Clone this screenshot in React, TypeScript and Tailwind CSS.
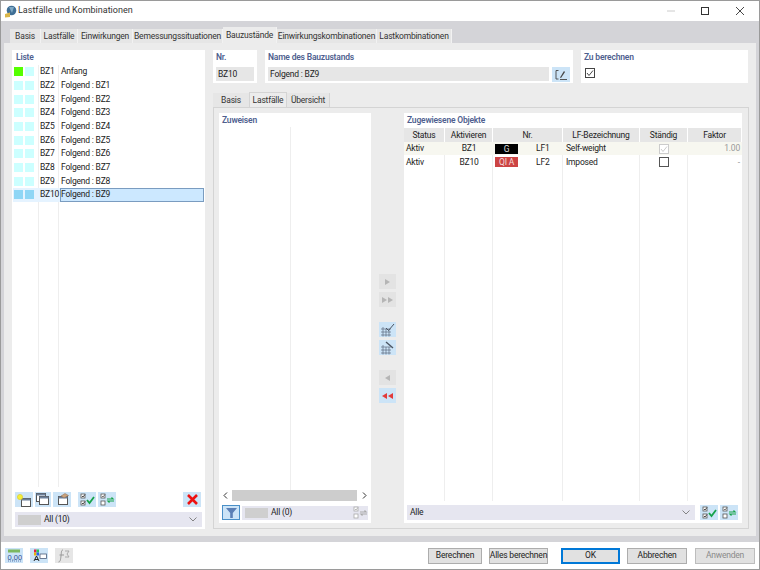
import type { ReactNode } from 'react'

const mainTabs = ['Basis', 'Lastfälle', 'Einwirkungen', 'Bemessungssituationen', 'Bauzustände', 'Einwirkungskombinationen', 'Lastkombinationen']
const mainTabWidths = [31, 37, 55, 90, 54, 100, 75]

const listRows = [
  ['BZ1', 'Anfang'],
  ['BZ2', 'Folgend : BZ1'],
  ['BZ3', 'Folgend : BZ2'],
  ['BZ4', 'Folgend : BZ3'],
  ['BZ5', 'Folgend : BZ4'],
  ['BZ6', 'Folgend : BZ5'],
  ['BZ7', 'Folgend : BZ6'],
  ['BZ8', 'Folgend : BZ7'],
  ['BZ9', 'Folgend : BZ8'],
  ['BZ10', 'Folgend : BZ9'],
]

function IconBtn({ children, className = 'bg-[#cce4f7]', w = 'w-[18px]' }: { children?: ReactNode; className?: string; w?: string }) {
  return <div className={`${w} h-[15px] flex items-center justify-center shrink-0 ${className}`}>{children}</div>
}

function Heading({ children }: { children: ReactNode }) {
  return <div className="text-[8.5px] tracking-[-0.2px] leading-[12px] font-semibold text-[#4f5f8f] whitespace-nowrap">{children}</div>
}

function Chevron() {
  return (
    <svg width="8" height="5" viewBox="0 0 8 5" className="shrink-0">
      <path d="M0.5 0.5 L4 4 L7.5 0.5" fill="none" stroke="#777" strokeWidth="0.9" />
    </svg>
  )
}

function CheckAll() {
  return (
    <svg width="15" height="13" viewBox="0 0 15 13">
      <rect x="1" y="1" width="4" height="4" fill="#fff" stroke="#555" strokeWidth="0.8" />
      <rect x="1" y="8" width="4" height="4" fill="#fff" stroke="#555" strokeWidth="0.8" />
      <path d="M2 3 L3 4 L5 1.5 M2 10 L3 11 L5 8.5" fill="none" stroke="#222" strokeWidth="0.8" />
      <path d="M7 7 L9.5 10 L14 4" fill="none" stroke="#16a34a" strokeWidth="1.8" />
    </svg>
  )
}

function CheckSwap({ muted = false }: { muted?: boolean }) {
  const green = muted ? '#aaa' : '#16a34a'
  const dark = muted ? '#aaa' : '#555'
  return (
    <svg width="15" height="13" viewBox="0 0 15 13">
      <rect x="1" y="1" width="4" height="4" fill="#fff" stroke={dark} strokeWidth="0.8" />
      <rect x="1" y="8" width="4" height="4" fill="#fff" stroke={dark} strokeWidth="0.8" />
      <path d="M2 3 L3 4 L5 1.5" fill="none" stroke={dark} strokeWidth="0.8" />
      <path d="M7 6 H13 L11.5 4.5 M14 8 H8 L9.5 9.5" fill="none" stroke={green} strokeWidth="1.2" />
    </svg>
  )
}

function WindowIcon({ kind }: { kind: 'new' | 'copy' | 'open' }) {
  return (
    <svg width="16" height="14" viewBox="0 0 16 14">
      {kind === 'copy' && <rect x="1.5" y="0.5" width="9" height="8" fill="#fff" stroke="#555" />}
      {kind === 'copy' && <rect x="1.5" y="0.5" width="9" height="2" fill="#6b7f99" />}
      <rect x={kind === 'new' ? 5.5 : 4.5} y={kind === 'new' ? 5.5 : 3.5} width="9" height="8" fill="#fff" stroke="#555" />
      <rect x={kind === 'new' ? 5.5 : 4.5} y={kind === 'new' ? 5.5 : 3.5} width="9" height="2" fill="#6b7f99" />
      {kind === 'new' && <circle cx="4" cy="4" r="2.6" fill="#f4ee3a" stroke="#d9c92a" strokeWidth="0.6" />}
      {kind === 'open' && <path d="M7 3 L11 0.5 L14.5 2.5 L10 5 Z" fill="#c9a27c" stroke="#8a6a50" strokeWidth="0.5" />}
    </svg>
  )
}

function GridTool({ kind }: { kind: 'check' | 'wrench' }) {
  return (
    <svg width="15" height="14" viewBox="0 0 15 14">
      <path d="M1 6 H11 M1 9 H11 M1 12 H11 M3 4 V13.5 M6 6 V13.5 M9 6 V13.5" stroke="#5b6b80" strokeWidth="0.7" fill="none" />
      {kind === 'check' ? (
        <path d="M6 5 L8.5 7.5 L14 1" fill="none" stroke="#4b5563" strokeWidth="1" />
      ) : (
        <path d="M6 1 L13 7" fill="none" stroke="#4b5563" strokeWidth="1.4" />
      )}
    </svg>
  )
}

function Tri({ dir, n = 1, color }: { dir: 'l' | 'r'; n?: number; color: string }) {
  return (
    <svg width={n === 2 ? 11 : 5} height="6" viewBox={n === 2 ? '0 0 11 6' : '0 0 5 6'}>
      {dir === 'r' ? <path d="M0 0 L5 3 L0 6 Z" fill={color} /> : <path d="M5 0 L0 3 L5 6 Z" fill={color} />}
      {n === 2 && (dir === 'r' ? <path d="M6 0 L11 3 L6 6 Z" fill={color} /> : <path d="M11 0 L6 3 L11 6 Z" fill={color} />)}
    </svg>
  )
}

function FooterButton({ label, variant = 'normal', w }: { label: string; variant?: 'normal' | 'ok' | 'off'; w: string }) {
  const look =
    variant === 'ok'
      ? 'border-2 border-[#0078d7] text-[#222]'
      : variant === 'off'
        ? 'border border-[#bdbdbd] text-[#8a8a8a] bg-[#cfcfcf]'
        : 'border border-[#adadad] text-[#222]'
  return (
    <div className={`${w} h-[16px] flex items-center justify-center whitespace-nowrap text-[8.5px] tracking-[-0.2px] bg-[#e1e1e1] shrink-0 ${look}`}>
      {label}
    </div>
  )
}

function ListPanel() {
  return (
    <div className="w-[193px] bg-white flex flex-col px-[1px]">
      <div className="h-[15px] pl-[3px] pt-[1px] shrink-0">
        <Heading>Liste</Heading>
      </div>
      <div className="relative flex-1 flex flex-col">
        <div className="absolute left-[25px] top-0 h-[422px] w-px bg-[#eeeeee]" />
        <div className="absolute left-[45px] top-0 h-[422px] w-px bg-[#eeeeee]" />
        {listRows.map(([code, name], i) => {
          const selected = i === 9
          return (
            <div key={code} className={`relative h-[13.67px] flex items-center text-[8.5px] tracking-[-0.2px] text-[#222] ${selected ? 'bg-[#e5f3ff]' : ''}`}>
              <div className={`w-[9px] h-[9px] ml-[1px] ${i === 0 ? 'bg-[#55ff00]' : selected ? 'bg-[#8fd6f5]' : 'bg-[#ccffff]'}`} />
              <div className={`w-[9px] h-[9px] ml-[2px] ${selected ? 'bg-[#8fd6f5]' : 'bg-[#ccffff]'}`} />
              <div className="w-[20px] ml-[6px] shrink-0">{code}</div>
              <div className={`flex-1 h-full flex items-center ${selected ? 'bg-[#cce8ff] border border-[#7a9cc0]' : 'pl-[1px]'}`}>{name}</div>
            </div>
          )
        })}
      </div>
      <div className="flex items-center h-[15px] pl-[2px] pr-[3px] shrink-0">
        <IconBtn><WindowIcon kind="new" /></IconBtn>
        <IconBtn className="bg-[#cce4f7] ml-[2px]" w="w-[16px]"><WindowIcon kind="copy" /></IconBtn>
        <IconBtn className="bg-[#cce4f7] ml-[2px]"><WindowIcon kind="open" /></IconBtn>
        <IconBtn className="bg-[#cce4f7] ml-[7px]"><CheckAll /></IconBtn>
        <IconBtn className="bg-[#cce4f7] ml-[2px]"><CheckSwap /></IconBtn>
        <IconBtn className="bg-[#cce4f7] ml-auto">
          <svg width="11" height="11" viewBox="0 0 11 11">
            <path d="M1 1 L10 10 M10 1 L1 10" stroke="#ee1111" strokeWidth="2.6" />
          </svg>
        </IconBtn>
      </div>
      <div className="h-[15px] mt-[5px] mb-[2px] mx-[2px] bg-[#e6e6f0] flex items-center pl-[3px] pr-[5px] text-[8.5px] tracking-[-0.2px] text-[#222] shrink-0">
        <div className="w-[23px] h-[10px] bg-[#cfcfcf] mr-[3px]" />
        <span className="flex-1">All (10)</span>
        <Chevron />
      </div>
    </div>
  )
}

function AssignPanel() {
  return (
    <div className="w-[152px] bg-white flex flex-col">
      <div className="h-[14px] pl-[3px] pt-[1px] shrink-0">
        <Heading>Zuweisen</Heading>
      </div>
      <div className="flex-1 relative">
        <div className="absolute left-[71px] top-0 bottom-0 w-px bg-[#eeeeee]" />
      </div>
      <div className="h-[11px] flex items-center shrink-0 bg-white">
        <div className="w-[13px] flex justify-center">
          <svg width="5" height="7" viewBox="0 0 5 7"><path d="M4 0.5 L1 3.5 L4 6.5" fill="none" stroke="#333" strokeWidth="1" /></svg>
        </div>
        <div className="flex-1 h-full bg-[#cdcdcd]" />
        <div className="w-[14px] flex justify-center">
          <svg width="5" height="7" viewBox="0 0 5 7"><path d="M1 0.5 L4 3.5 L1 6.5" fill="none" stroke="#333" strokeWidth="1" /></svg>
        </div>
      </div>
      <div className="h-[15px] mt-[4px] mb-[3px] flex items-center pl-[3px] pr-[3px] shrink-0">
        <div className="w-[18px] h-[15px] bg-[#cce4f7] border border-[#4a90c8] flex items-center justify-center">
          <svg width="11" height="10" viewBox="0 0 11 10"><path d="M0 0 H11 L6.8 5 V10 H4.2 V5 Z" fill="#5b7fb5" /></svg>
        </div>
        <div className="flex-1 ml-[2px] h-[14px] bg-[#e6e6f0] flex items-center pl-[3px] text-[8.5px] tracking-[-0.2px] text-[#222]">
          <div className="w-[23px] h-[10px] bg-[#cfcfcf] mr-[3px]" />
          <span className="flex-1">All (0)</span>
          <CheckSwap muted />
        </div>
      </div>
    </div>
  )
}

function MoveColumn() {
  return (
    <div className="w-[33px] flex flex-col items-center pt-[161px]">
      <IconBtn className="bg-[#e3e3e3]" w="w-[17px]"><Tri dir="r" color="#b5b5b5" /></IconBtn>
      <IconBtn className="bg-[#e3e3e3] mt-[3px]" w="w-[17px]"><Tri dir="r" n={2} color="#b5b5b5" /></IconBtn>
      <IconBtn className="bg-[#cce4f7] mt-[15px]" w="w-[17px]"><GridTool kind="check" /></IconBtn>
      <IconBtn className="bg-[#cce4f7] mt-[3px]" w="w-[17px]"><GridTool kind="wrench" /></IconBtn>
      <IconBtn className="bg-[#e3e3e3] mt-[15px]" w="w-[17px]"><Tri dir="l" color="#b5b5b5" /></IconBtn>
      <IconBtn className="bg-[#cce4f7] mt-[3px]" w="w-[17px]"><Tri dir="l" n={2} color="#e23b3b" /></IconBtn>
    </div>
  )
}

function ObjectsPanel() {
  const cols = 'grid grid-cols-[41px_48px_70px_77px_48px_54px]'
  return (
    <div className="w-[338px] bg-white flex flex-col">
      <div className="h-[15px] pl-[3px] pt-[1px] shrink-0">
        <Heading>Zugewiesene Objekte</Heading>
      </div>
      <div className="relative flex-1 text-[8.5px] tracking-[-0.2px] text-[#222]">
        <div className={`absolute inset-0 ${cols}`}>
          {[0, 1, 2, 3, 4, 5].map((c) => (
            <div key={c} className={c < 5 ? 'border-r border-[#eeeeee]' : ''} />
          ))}
        </div>
        <div className={`relative h-[14px] bg-[#e6e6e6] items-center text-center ${cols}`}>
          {['Status', 'Aktivieren', 'Nr.', 'LF-Bezeichnung', 'Ständig', 'Faktor'].map((h) => (
            <div key={h} className="border-r border-white h-full leading-[14px]">{h}</div>
          ))}
        </div>
        <div className={`relative h-[13px] bg-[#f7f7f0] items-center ${cols}`}>
          <div className="pl-[2px]">Aktiv</div>
          <div className="text-center">BZ1</div>
          <div className="flex items-center pl-[2px]">
            <div className="w-[23px] h-[10px] bg-black text-[#dddddd] text-center leading-[10px]">G</div>
            <span className="ml-[18px]">LF1</span>
          </div>
          <div className="pl-[3px]">Self-weight</div>
          <div className="flex justify-center">
            <div className="w-[10px] h-[10px] border border-[#cccccc] bg-white flex items-center justify-center">
              <svg width="8" height="8" viewBox="0 0 8 8"><path d="M1 4 L3 6.5 L7 1.5" fill="none" stroke="#cccccc" strokeWidth="1" /></svg>
            </div>
          </div>
          <div className="text-right pr-[2px] text-[#999999]">1.00</div>
        </div>
        <div className={`relative h-[14px] items-center ${cols}`}>
          <div className="pl-[2px]">Aktiv</div>
          <div className="text-center">BZ10</div>
          <div className="flex items-center pl-[2px]">
            <div className="w-[23px] h-[10px] bg-[#cc4444] text-[#f5dddd] text-center leading-[10px]">QI A</div>
            <span className="ml-[18px]">LF2</span>
          </div>
          <div className="pl-[3px]">Imposed</div>
          <div className="flex justify-center">
            <div className="w-[10px] h-[10px] border border-[#555555] bg-white" />
          </div>
          <div className="text-right pr-[2px] text-[#999999]">-</div>
        </div>
      </div>
      <div className="h-[15px] mt-[4px] mb-[3px] flex items-center pl-[3px] pr-[4px] shrink-0">
        <div className="w-[289px] h-[15px] bg-[#e6e6f0] flex items-center pl-[3px] pr-[5px] text-[8.5px] tracking-[-0.2px] text-[#222]">
          <span className="flex-1">Alle</span>
          <Chevron />
        </div>
        <IconBtn className="bg-[#cce4f7] ml-[5px]"><CheckAll /></IconBtn>
        <IconBtn className="bg-[#cce4f7] ml-[2px]"><CheckSwap /></IconBtn>
      </div>
    </div>
  )
}

export default function App() {
  return (
    <div className="w-[760px] h-[570px] border border-[#9a9a9a] bg-white flex flex-col overflow-hidden font-['Roboto',sans-serif]">
      {/* Title bar */}
      <div className="h-[20px] flex items-center shrink-0">
        <svg width="13" height="13" viewBox="0 0 13 13" className="ml-[3px]">
          <circle cx="7.5" cy="5.5" r="4.8" fill="#3f6f96" />
          <path d="M5 2 L10 2 L8 8 Z" fill="#7fa9c5" />
          <path d="M1 9 L6 7.5 L6 12 L1 12.5 Z" fill="#d9b64a" />
        </svg>
        <span className="ml-[1px] text-[9px] text-[#333333]">Lastfälle und Kombinationen</span>
        <svg width="10" height="10" viewBox="0 0 10 10" className="ml-auto mr-[24px]">
          <path d="M1 5 H9" stroke="#cccccc" strokeWidth="1" />
        </svg>
        <svg width="10" height="10" viewBox="0 0 10 10" className="mr-[25px]">
          <rect x="1.5" y="1.5" width="7" height="7" fill="none" stroke="#333" strokeWidth="1" />
        </svg>
        <svg width="10" height="10" viewBox="0 0 10 10" className="mr-[14px]">
          <path d="M1 1 L9 9 M9 1 L1 9" stroke="#333" strokeWidth="0.9" />
        </svg>
      </div>

      {/* Tab band and page */}
      <div className="flex-1 bg-[#d4d4d8] flex flex-col px-[3px] pb-[6px] min-h-0">
        <div className="h-[22px] flex items-end pl-[6px] shrink-0">
          {mainTabs.map((t, i) => (
            <div
              key={t}
              style={{ width: mainTabWidths[i] }}
              className={`flex items-center justify-center whitespace-nowrap text-[8.5px] tracking-[-0.2px] text-[#333333] border-r border-[#f2f2f2] ${i === 4 ? 'h-[16px] bg-[#ececec]' : 'h-[14px] bg-[#e6e6e6]'}`}
            >
              {t}
            </div>
          ))}
        </div>
        <div className="flex-1 bg-[#ececec] flex pl-[8px] pr-[7px] pt-[7px] pb-[7px] gap-[8px] min-h-0">
          <ListPanel />
          <div className="flex-1 flex flex-col min-w-0">
            <div className="h-[33px] flex gap-[8px] shrink-0">
              <div className="w-[44px] bg-white px-[3px] pt-[1px]">
                <Heading>Nr.</Heading>
                <div className="mt-[4px] h-[14px] bg-[#e6e6e6] text-[8.5px] tracking-[-0.2px] leading-[14px] pl-[2px] text-[#222]">BZ10</div>
              </div>
              <div className="w-[308px] bg-white px-[3px] pt-[1px]">
                <Heading>Name des Bauzustands</Heading>
                <div className="mt-[4px] flex gap-[3px]">
                  <div className="flex-1 h-[14px] bg-[#e6e6e6] text-[8.5px] tracking-[-0.2px] leading-[14px] pl-[2px] text-[#222]">Folgend : BZ9</div>
                  <IconBtn className="bg-[#cce4f7]">
                    <svg width="13" height="12" viewBox="0 0 13 12">
                      <path d="M3.5 1.5 H1 V10 H3.5 M5 10.5 H12" fill="none" stroke="#444" strokeWidth="0.9" />
                      <path d="M5 8.5 L9 2 L10 3 L6 9 Z" fill="#444" />
                    </svg>
                  </IconBtn>
                </div>
              </div>
              <div className="w-[167px] bg-white px-[3px] pt-[1px]">
                <Heading>Zu berechnen</Heading>
                <div className="mt-[5px] ml-[1px] w-[10px] h-[10px] border border-[#444444] flex items-center justify-center">
                  <svg width="8" height="8" viewBox="0 0 8 8"><path d="M1 4 L3 6.5 L7 1.5" fill="none" stroke="#333" strokeWidth="0.9" /></svg>
                </div>
              </div>
            </div>
            <div className="h-[15px] mt-[9px] flex items-end shrink-0">
              <div className="w-[36px] h-[14px] bg-[#e6e6e6] flex items-center justify-center text-[8.5px] tracking-[-0.2px] text-[#333333]">Basis</div>
              <div className="w-[38px] h-[15px] bg-[#ececec] border border-b-0 border-[#d4d4d4] flex items-center justify-center text-[8.5px] tracking-[-0.2px] text-[#333333]">Lastfälle</div>
              <div className="w-[43px] h-[14px] bg-[#e6e6e6] border-r border-[#d4d4d4] flex items-center justify-center text-[8.5px] tracking-[-0.2px] text-[#333333]">Übersicht</div>
            </div>
            <div className="flex-1 border border-[#d4d4d4] flex p-[5px] min-h-0">
              <AssignPanel />
              <MoveColumn />
              <ObjectsPanel />
            </div>
          </div>
        </div>
      </div>

      {/* Footer */}
      <div className="h-[27px] flex items-center shrink-0 pl-[4px] pr-[4px]">
        <IconBtn>
          <svg width="15" height="13" viewBox="0 0 15 13">
            <rect x="1" y="0.5" width="12" height="3" fill="#7cb860" />
            <text x="0.5" y="10.5" fontSize="7.5" fill="#2f4f8f" fontFamily="Liberation Sans">0,00</text>
            <path d="M1 12 H14" stroke="#2f4f8f" strokeWidth="0.7" strokeDasharray="1 1" />
          </svg>
        </IconBtn>
        <IconBtn className="bg-[#cce4f7] ml-[7px]">
          <svg width="15" height="14" viewBox="0 0 15 14">
            <rect x="2" y="0.5" width="2.5" height="3" fill="#e11d48" />
            <rect x="4.5" y="0.5" width="2.5" height="3" fill="#22c55e" />
            <rect x="2" y="3.5" width="2.5" height="3" fill="#eab308" />
            <rect x="4.5" y="3.5" width="2.5" height="3" fill="#2563eb" />
            <path d="M2 12 L4.5 7 L7 12 M3 10.5 H6" fill="none" stroke="#222" strokeWidth="1" />
            <rect x="8" y="5" width="6.5" height="4.5" fill="#fff" stroke="#4b5d7a" strokeWidth="0.8" />
          </svg>
        </IconBtn>
        <IconBtn className="bg-[#e6e6e6] ml-[7px]">
          <svg width="14" height="14" viewBox="0 0 14 14">
            <path d="M6 1 C4 1 4.5 4 4 7 C3.6 10 3.5 13 1.5 13 M2.5 6 H7" fill="none" stroke="#999" strokeWidth="1" />
            <path d="M8 2 H12 L10 5 L12 8 H8" fill="none" stroke="#aaa" strokeWidth="1" />
          </svg>
        </IconBtn>
        <div className="ml-auto flex items-center">
          <FooterButton label="Berechnen" w="w-[54px]" />
          <div className="w-[7px]" />
          <FooterButton label="Alles berechnen" w="w-[59px]" />
          <div className="w-[13px]" />
          <FooterButton label="OK" variant="ok" w="w-[59px]" />
          <div className="w-[7px]" />
          <FooterButton label="Abbrechen" w="w-[60px]" />
          <div className="w-[8px]" />
          <FooterButton label="Anwenden" variant="off" w="w-[60px]" />
        </div>
      </div>
    </div>
  )
}
